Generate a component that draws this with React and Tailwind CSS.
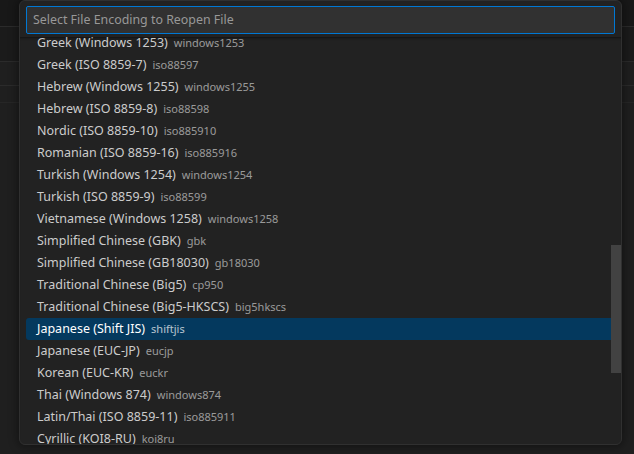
import React from "react";

const rows = [
  ["Greek (Windows 1253)", "windows1253"],
  ["Greek (ISO 8859-7)", "iso88597"],
  ["Hebrew (Windows 1255)", "windows1255"],
  ["Hebrew (ISO 8859-8)", "iso88598"],
  ["Nordic (ISO 8859-10)", "iso885910"],
  ["Romanian (ISO 8859-16)", "iso885916"],
  ["Turkish (Windows 1254)", "windows1254"],
  ["Turkish (ISO 8859-9)", "iso88599"],
  ["Vietnamese (Windows 1258)", "windows1258"],
  ["Simplified Chinese (GBK)", "gbk"],
  ["Simplified Chinese (GB18030)", "gb18030"],
  ["Traditional Chinese (Big5)", "cp950"],
  ["Traditional Chinese (Big5-HKSCS)", "big5hkscs"],
  ["Japanese (Shift JIS)", "shiftjis"],
  ["Japanese (EUC-JP)", "eucjp"],
  ["Korean (EUC-KR)", "euckr"],
  ["Thai (Windows 874)", "windows874"],
  ["Latin/Thai (ISO 8859-11)", "iso885911"],
  ["Cyrillic (KOI8-RU)", "koi8ru"],
];

export default function App() {
  const selected = 13;

  return (
    <div
      className="relative w-[634px] h-[454px] overflow-hidden bg-[#1f1f1f]"
      style={{ fontFamily: '"Noto Sans", "Open Sans", sans-serif' }}
    >
      {/* editor behind the picker */}
      <div className="flex flex-col">
        <div className="h-[27px] bg-[#181818] border-b border-[#2b2b2b]" />
        <div className="h-[35px] bg-[#1b1b1b] border-b border-[#2b2b2b]" />
        <div className="h-[24px] bg-[#1f1f1f] border-b border-[#2b2b2b]" />
        <div className="h-[17px] bg-[#1f1f1f] border-b border-[#262626]" />
      </div>

      {/* quick pick */}
      <div className="absolute left-[19px] top-0 w-[603px] h-[445px] bg-[#222222] border border-[#303030] rounded-[6px] shadow-[0_0_8px_2px_rgba(0,0,0,0.36)] flex flex-col overflow-hidden">
        <div className="px-[6px] pt-[5px] pb-[3px]">
          <div className="h-[28px] bg-[#313131] border border-[#0078d4] rounded-[2px] flex items-center px-[6px]">
            <span className="text-[12.4px] text-[#989898]">Select File Encoding to Reopen File</span>
          </div>
        </div>
        <div className="relative flex-1 overflow-hidden shadow-[inset_0_3px_3px_-2px_rgba(0,0,0,0.5)]">
          <div className="-mt-[5px] px-[6px]">
            {rows.map(([label, desc], i) => (
              <div
                key={label}
                className={
                  i === selected
                    ? "h-[22px] flex items-center pl-[11px] rounded-[3px] bg-[#04395e]"
                    : "h-[22px] flex items-center pl-[11px]"
                }
              >
                <span className={i === selected ? "text-[12.5px] text-white" : "text-[12.5px] text-[#cccccc]"}>
                  {label}
                </span>
                <span
                  className={
                    i === selected
                      ? "ml-[6px] text-[11px] text-white opacity-70"
                      : "ml-[6px] text-[11px] text-[#cccccc] opacity-70"
                  }
                >
                  {desc}
                </span>
              </div>
            ))}
          </div>
          <div className="absolute right-0 top-[208px] w-[10px] h-[128px] bg-[#424242]" />
        </div>
      </div>
    </div>
  );
}
